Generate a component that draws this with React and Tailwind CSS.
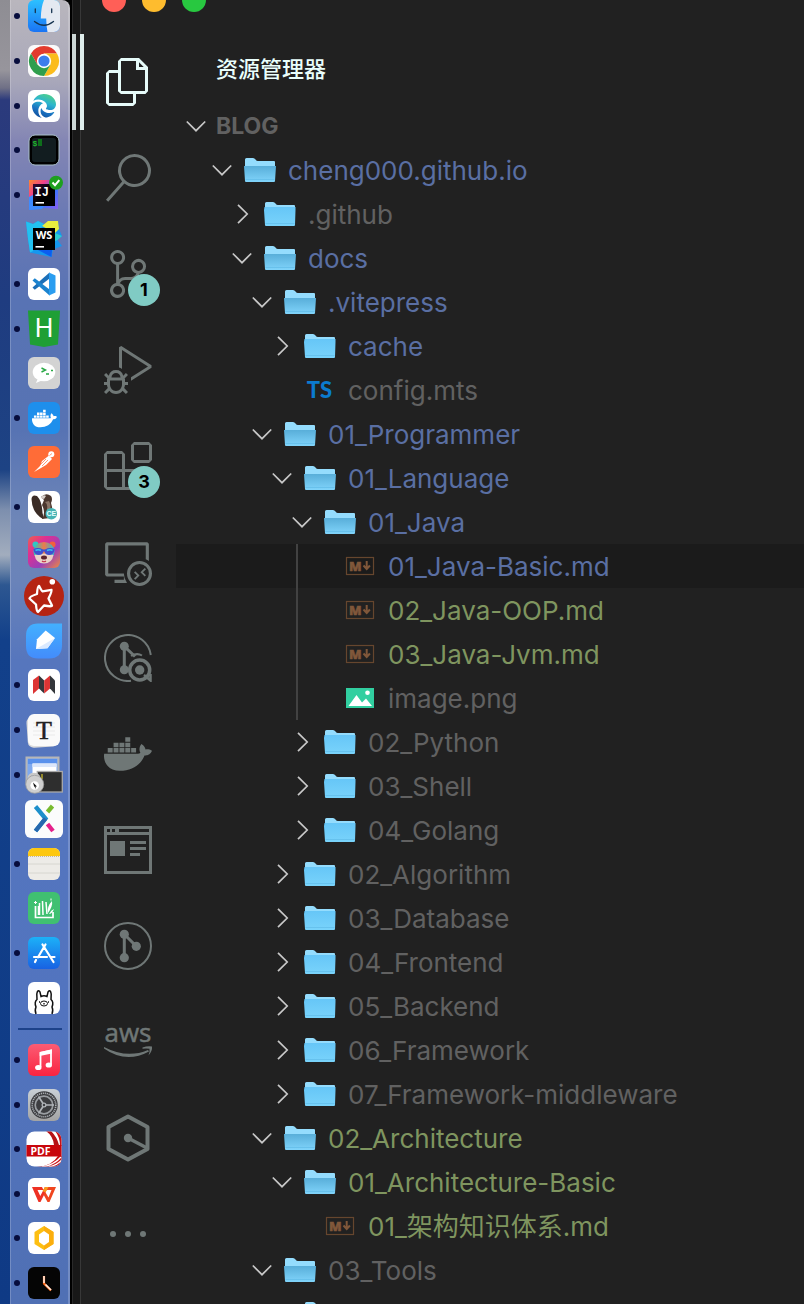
import React from "react";
import { VscFiles, VscSearch, VscSourceControl, VscDebugAlt, VscExtensions, VscRemoteExplorer } from "react-icons/vsc";
import { FaDocker, FaEdge } from "react-icons/fa6";

/* ---------- dock icons: 40x40 canvas, the tile itself is 32x32 ---------- */

const Tile = ({ fill = "#fff" }) => <rect x="4" y="4" width="32" height="32" rx="6" fill={fill} />;

const dockTop = [
  {
    name: "Finder",
    running: true,
    art: (
      <>
        <defs>
          <linearGradient id="finder" x1="0" y1="0" x2="0" y2="1">
            <stop offset="0" stopColor="#2cc0ff" />
            <stop offset="1" stopColor="#1a74f4" />
          </linearGradient>
        </defs>
        <Tile fill="url(#finder)" />
        <path d="M20 4H30a6 6 0 0 1 6 6V30a6 6 0 0 1-6 6H23.500Q22.300 30 22.200 22.500H16.800Q17 11 20 4Z" fill="#e4e9f1" />
        <path d="M11.300 13v3.500M27.700 13v3.500" stroke="#16334f" strokeWidth="1.300" strokeLinecap="round" />
        <path d="M10.500 25.500Q20 33 29.500 25.500" stroke="#16334f" strokeWidth="1.300" fill="none" strokeLinecap="round" />
      </>
    ),
  },
  {
    name: "Chrome",
    running: true,
    art: (
      <>
        <Tile fill="#fafafa" />
        <path d="M20 12.500H33A15 15 0 0 0 7 12.500L13.500 23.750Z" fill="#e33b2e" />
        <path d="M20 12.500H33A15 15 0 0 0 7 12.500L13.500 23.750Z" fill="#fbbc1c" transform="rotate(120 20 20)" />
        <path d="M20 12.500H33A15 15 0 0 0 7 12.500L13.500 23.750Z" fill="#2f9e4c" transform="rotate(240 20 20)" />
        <circle cx="20" cy="20" r="7.200" fill="#fff" />
        <circle cx="20" cy="20" r="5.600" fill="#3b7ded" />
      </>
    ),
  },
  {
    name: "Edge",
    running: true,
    art: (
      <>
        <defs>
          <linearGradient id="edge" x1="0.700" y1="0" x2="0.300" y2="1">
            <stop offset="0" stopColor="#4fd08a" />
            <stop offset="0.350" stopColor="#2cb5cf" />
            <stop offset="0.700" stopColor="#1a72c2" />
            <stop offset="1" stopColor="#124f9c" />
          </linearGradient>
        </defs>
        <Tile />
        <FaEdge x="8" y="8" size={24} fill="url(#edge)" />
      </>
    ),
  },
  {
    name: "iTerm",
    running: true,
    art: (
      <>
        <rect x="5" y="5" width="30" height="30" rx="6" fill="#000" stroke="#a9bfca" strokeWidth="1" />
        <rect x="8" y="8" width="24" height="24" rx="3" fill="#121d20" />
        <text x="8.500" y="15.500" fontSize="8" fontWeight="700" fill="#1fb52c" fontFamily="Liberation Mono, monospace">$</text>
        <rect x="14" y="9" width="4" height="7" fill="#0e6f1b" />
      </>
    ),
  },
  {
    name: "IntelliJ IDEA",
    running: true,
    art: (
      <>
        <defs>
          <linearGradient id="ij" x1="0" y1="0" x2="1" y2="1">
            <stop offset="0" stopColor="#ff8a2a" />
            <stop offset="0.300" stopColor="#f0408c" />
            <stop offset="0.550" stopColor="#2b7bff" />
            <stop offset="1" stopColor="#8b5cf0" />
          </linearGradient>
          <linearGradient id="ijin" x1="0" y1="0" x2="1" y2="1">
            <stop offset="0" stopColor="#3a0a38" />
            <stop offset="0.500" stopColor="#000" />
          </linearGradient>
        </defs>
        <path d="M5 5H34V34L20 33L5 35Z" fill="url(#ij)" />
        <path d="M5 22L9 20V31L20 31L18 34L5 35Z" fill="#3d8bff" />
        <rect x="9" y="9" width="22" height="22" fill="url(#ijin)" />
        <text x="10.500" y="20.500" fontSize="12" fontWeight="700" fill="#fff" fontFamily="Liberation Mono, monospace">IJ</text>
        <rect x="11.500" y="27" width="8.500" height="1.600" fill="#fff" />
        <circle cx="32" cy="7.700" r="7" fill="#1ea01e" />
        <path d="M28.500 7.500L31 10.200L35.300 5.200" stroke="#fff" strokeWidth="2" fill="none" />
      </>
    ),
  },
  {
    name: "WebStorm",
    art: (
      <>
        <path d="M2 2.500L9 5L14 2L20 5L34 2.500L35 10L38 17L33.500 21L38 27L29 30.500L27.500 38L6 33.500L4 20Z" fill="#1597ee" />
        <path d="M2 2.500L9 5L14 2L20 5L15 12L9 32L6 33.500L4 20Z" fill="#22c1f0" />
        <path d="M18 7L24 2H34L35 10L31 14Z" fill="#e9ee3f" />
        <path d="M31 14L38 17L33.500 21L31 22Z" fill="#2ccfd0" />
        <path d="M14 31H28L27.500 38Z" fill="#0b5df0" />
        <rect x="9" y="9" width="22" height="22" fill="#000" />
        <text x="20" y="20" fontSize="11" fontWeight="700" textAnchor="middle" fill="#fff" fontFamily="Open Sans, sans-serif">WS</text>
        <rect x="11.500" y="27" width="8.500" height="1.600" fill="#fff" />
      </>
    ),
  },
  {
    name: "Visual Studio Code",
    running: true,
    art: (
      <>
        <Tile />
        <path d="M25.500 8.500L8.500 23.500L10.800 25.800L25.500 14.500Z" fill="#1b6fb8" />
        <path d="M25.500 31.500L8.500 16.500L10.800 14.300L25.500 25.500Z" fill="#1b83cf" />
        <path d="M25 8.500L31.500 11.500V28.500L25 31.500Z" fill="#2a9df0" />
      </>
    ),
  },
  {
    name: "HBuilderX",
    running: true,
    art: (
      <>
        <path d="M4 1.500H36L34 35.500L20 38L6 35.500Z" fill="#1f9f35" />
        <text x="20" y="28" fontSize="25" fontWeight="400" textAnchor="middle" fill="#fff" fontFamily="Inter, sans-serif">H</text>
      </>
    ),
  },
  {
    name: "WeChat DevTools",
    art: (
      <>
        <Tile fill="#d3d3d3" />
        <ellipse cx="20" cy="19" rx="11.300" ry="9.300" fill="#fff" />
        <path d="M14 25L12 30L19 27Z" fill="#fff" />
        <path d="M17.500 15L21.500 17L17.500 19" stroke="#27a844" strokeWidth="1.400" fill="none" />
        <path d="M22 21h3M27 17.500h2" stroke="#27a844" strokeWidth="1.700" />
      </>
    ),
  },
  {
    name: "Docker",
    running: true,
    art: (
      <>
        <Tile fill="#1e8fec" />
        <FaDocker x="8" y="8" size={25} fill="#fff" />
      </>
    ),
  },
  {
    name: "Postman",
    art: (
      <>
        <Tile fill="#ff6c37" />
        <circle cx="27.300" cy="12.300" r="3" fill="#fff" />
        <path d="M25 13.500L28 17L22 23L17 26L10 30L16 24L18 19Z" fill="#fff" />
        <path d="M18 24L24 18M16 23L22 17M25.500 13.500L28 11.500" stroke="#ff6c37" strokeWidth="0.700" />
      </>
    ),
  },
  {
    name: "DBeaver",
    running: true,
    art: (
      <>
        <Tile />
        <path d="M7.500 12Q8 7 13 9Q18 14 18.500 26Q20 31 19 32Q8 26 7.500 12Z" fill="#3a2b25" />
        <path d="M17 10Q22 5 27 9Q29 12 27 16Q30 25 26 31L18 32Q22 26 18 18L20 13Z" fill="#4b372e" />
        <path d="M16.500 11Q19 7 22 9L20 12Z" fill="#d7cfca" />
        <path d="M21 15Q24 17 23 22L25 27Q28 19 25 14Z" fill="#8a7466" />
        <circle cx="27.300" cy="26.700" r="5.800" fill="#45b3b3" />
        <text x="27.300" y="29.200" fontSize="7" fontWeight="700" textAnchor="middle" fill="#e8ffff" fontFamily="Liberation Sans, sans-serif">CE</text>
      </>
    ),
  },
  {
    name: "Bear player",
    art: (
      <>
        <defs>
          <linearGradient id="bear" x1="0" y1="0" x2="1" y2="1">
            <stop offset="0" stopColor="#f0604a" />
            <stop offset="0.300" stopColor="#e02f92" />
            <stop offset="0.650" stopColor="#9a40b8" />
            <stop offset="1" stopColor="#f08a40" />
          </linearGradient>
          <linearGradient id="bearface" x1="0" y1="0" x2="1" y2="0">
            <stop offset="0" stopColor="#26c8c0" />
            <stop offset="0.500" stopColor="#f07a4a" />
            <stop offset="1" stopColor="#28b8d8" />
          </linearGradient>
        </defs>
        <Tile fill="url(#bear)" />
        <circle cx="11.500" cy="12.500" r="3" fill="#2fc7c4" />
        <circle cx="28.500" cy="12.500" r="3" fill="#f2603c" />
        <ellipse cx="20" cy="19.500" rx="10.500" ry="9.500" fill="url(#bearface)" />
        <path d="M10.500 23Q20 20 29.500 23Q28 31.500 20 31.500Q12 31.500 10.500 23Z" fill="#ead2c8" />
        <path d="M9.500 17Q14 15 19 17.500H21Q26 15 30.500 17Q30 23 25 23Q21.500 23 20.500 19.500H19.500Q18.500 23 15 23Q10 23 9.500 17Z" fill="#3f4fd0" />
        <path d="M11.500 18.500Q14 17 17 18.500M23 18.500Q26 17 28.500 18.500" stroke="#35c3ee" strokeWidth="1.500" fill="none" />
        <ellipse cx="20" cy="25.500" rx="3" ry="2" fill="#5b2430" />
        <path d="M18 29Q20 30.500 22 29" stroke="#c4354a" strokeWidth="1.200" fill="none" />
      </>
    ),
  },
  {
    name: "RedisInsight",
    art: (
      <>
        <circle cx="20" cy="20" r="20" fill="#b52312" />
        <path d="M15 9.800Q17.500 15 18.500 15.300L27.500 13.800Q28.500 14.500 24.500 22.500L28 29.500Q28 31 20 29.500L14 36Q12.500 36 12 28.500L5.500 22.500Q5.500 20.500 13 18Q13.500 10 15 9.800Z" stroke="#fff" strokeWidth="2.300" fill="none" strokeLinejoin="round" />
        <circle cx="28.300" cy="5.700" r="2.800" fill="#fff" />
      </>
    ),
  },
  {
    name: "Pen notes",
    art: (
      <>
        <defs>
          <linearGradient id="pen" x1="0" y1="0" x2="0" y2="1">
            <stop offset="0" stopColor="#43b0ff" />
            <stop offset="1" stopColor="#438cfb" />
          </linearGradient>
        </defs>
        <path d="M14 2.500H38V24Q38 37.500 25 37.500H14Q2 37.500 2 25V15Q2 2.500 14 2.500Z" fill="url(#pen)" />
        <path d="M21.700 9.500L31 17L23.500 27.300L12 28L13 18.300Z" fill="#fff" />
        <path d="M31 17L23.500 27.300L12 28Z" fill="#dbeaff" />
      </>
    ),
  },
  {
    name: "MindMaster",
    running: true,
    art: (
      <>
        <Tile />
        <path d="M9 15L15 10.500V23.500L9 29Z" fill="#dc3434" />
        <path d="M15 10.500L20.200 15.500V28.500L15 23.500Z" fill="#33363b" />
        <path d="M20.200 15.500L26 10.500V23.500L20.200 28.500Z" fill="#dc3434" />
        <path d="M26 10.500L31 15.500V29L26 23.500Z" fill="#33363b" />
      </>
    ),
  },
  {
    name: "Typora",
    running: true,
    art: (
      <>
        <rect x="3" y="6" width="31" height="31" rx="6" fill="#dcdcdc" transform="rotate(-4 20 20)" />
        <Tile fill="#fafafa" />
        <path d="M9 13H31M9 17H31M9 21H31M9 25H31" stroke="#e2e2e2" strokeWidth="0.700" />
        <text x="20" y="28.500" fontSize="26" textAnchor="middle" fill="#222" stroke="#222" strokeWidth="0.500" fontFamily="Liberation Serif, serif">T</text>
      </>
    ),
  },
  {
    name: "Secure shell",
    running: true,
    art: (
      <>
        <rect x="2.500" y="2.500" width="32" height="25" fill="#7fa9ee" stroke="#b6b6b6" strokeWidth="2" />
        <rect x="4" y="4" width="29" height="5" fill="#5a91ec" />
        <rect x="8.500" y="8.500" width="24" height="16" fill="#fff" />
        <rect x="8.500" y="8.500" width="24" height="3.500" fill="#dbe6fa" />
        <rect x="13.300" y="16.500" width="25" height="20.500" fill="#2e2e2e" stroke="#a9a9a9" strokeWidth="1.300" />
        <path d="M18 19v5" stroke="#d6c52a" strokeWidth="1.200" />
        <path d="M5 27V22Q6 19 10 19Q14 19 15 22V27" stroke="#c9c9c9" strokeWidth="2.500" fill="none" />
        <circle cx="10.700" cy="29.300" r="9" fill="#cfcfcf" stroke="#9b9b9b" strokeWidth="0.800" />
        <circle cx="10.700" cy="30.500" r="4.300" fill="#fff" />
        <path d="M9 27.500L13 31.500H11.500L12 34L10 31Z" fill="#111" />
      </>
    ),
  },
  {
    name: "X tool",
    art: (
      <>
        <rect x="1" y="1" width="38" height="38" rx="6" fill="#fbfcfc" />
        <path d="M11.500 7.500L21.500 19.500L11.500 32" stroke="#1c8fcb" strokeWidth="4.300" fill="none" />
        <path d="M21.500 19.500L11.500 32" stroke="#2768ae" strokeWidth="4.300" />
        <path d="M23.500 13L28.500 7" stroke="#78bb2f" strokeWidth="4.300" />
        <path d="M23.500 25L29 32" stroke="#e5218b" strokeWidth="4.300" />
      </>
    ),
  },
  {
    name: "Notes",
    running: true,
    art: (
      <>
        <Tile fill="#edebe7" />
        <path d="M4 12V10a6 6 0 0 1 6-6H30a6 6 0 0 1 6 6V12Z" fill="#fdc70f" />
        <path d="M4 12.500H36" stroke="#b7a987" strokeWidth="0.800" strokeDasharray="1 1" />
        <path d="M4 20H36M4 29H36" stroke="#d2d0cc" strokeWidth="0.800" />
      </>
    ),
  },
  {
    name: "Books",
    art: (
      <>
        <Tile fill="#40c071" />
        <path d="M11.500 18V29.500H29V24" stroke="#fff" strokeWidth="1.700" fill="none" />
        <path d="M15.500 15V27M18.500 13L19 27M22 14L23 26M14.500 18V27" stroke="#fff" strokeWidth="1.500" />
        <path d="M24 25Q23 18 28 13Q29 18 24 25ZM25 26Q27 22 30 21Q28 26 25 26Z" fill="#fff" />
        <path d="M11.500 13v3M10 14.500h3M27 10.500v2" stroke="#fff" strokeWidth="1" />
      </>
    ),
  },
  {
    name: "App Store",
    running: true,
    art: (
      <>
        <defs>
          <linearGradient id="store" x1="0" y1="0" x2="0" y2="1">
            <stop offset="0" stopColor="#1cb1f8" />
            <stop offset="1" stopColor="#1862e3" />
          </linearGradient>
        </defs>
        <Tile fill="url(#store)" />
        <path d="M21.500 11.500L14 24.300M18.500 11.500L29.500 29M10 24H23M27.500 24H30.500M12 27L11 29" stroke="#fff" strokeWidth="2.200" strokeLinecap="round" />
      </>
    ),
  },
  {
    name: "Ollama",
    art: (
      <>
        <Tile />
        <path d="M12 36Q10.500 32 12 29Q10 24 13 21.500L12.800 16Q13.500 11 16 14L17 18.500Q20 17 23 18.500L24 14Q26.500 11 27.200 16L27 21.500Q30 24 28 29Q29.500 32 28 36" stroke="#111" strokeWidth="1.500" fill="none" />
        <ellipse cx="20" cy="25.500" rx="3.500" ry="2.500" stroke="#111" strokeWidth="1" fill="none" />
        <path d="M20 25v1.500M15 24h1M24 24h1" stroke="#111" strokeWidth="1.300" />
      </>
    ),
  },
];

const dockBottom = [
  {
    name: "Music",
    running: true,
    art: (
      <>
        <defs>
          <linearGradient id="music" x1="0" y1="0" x2="0" y2="1">
            <stop offset="0" stopColor="#fb5c74" />
            <stop offset="1" stopColor="#fa2440" />
          </linearGradient>
        </defs>
        <Tile fill="url(#music)" />
        <path d="M16.500 27V13L27 10.500V24.500" stroke="#fff" strokeWidth="1.800" fill="none" />
        <path d="M15.700 12L27.900 9.500V13.500L15.700 16Z" fill="#fff" />
        <ellipse cx="14.300" cy="27.500" rx="3.200" ry="2.600" fill="#fff" />
        <ellipse cx="24.800" cy="25" rx="3.200" ry="2.600" fill="#fff" />
      </>
    ),
  },
  {
    name: "System Settings",
    running: true,
    art: (
      <>
        <defs>
          <linearGradient id="gear" x1="0" y1="0" x2="0" y2="1">
            <stop offset="0" stopColor="#c9d0d6" />
            <stop offset="1" stopColor="#a3a3a3" />
          </linearGradient>
        </defs>
        <Tile fill="url(#gear)" />
        <circle cx="20" cy="20" r="13.700" fill="#3c3d40" />
        <circle cx="20" cy="20" r="11.800" stroke="#a9adb1" strokeWidth="1.600" strokeDasharray="1.200 0.800" fill="none" />
        <circle cx="20" cy="20" r="8.800" stroke="#9a9ea2" strokeWidth="1.700" fill="none" />
        <path d="M20 20H30M20 20L14.500 11.500M20 20L14.500 28.500" stroke="#b0b4b8" strokeWidth="1.700" />
        <circle cx="20" cy="20" r="2.500" fill="#b0b4b8" />
        <circle cx="20" cy="20" r="1.200" fill="#3c3d40" />
      </>
    ),
  },
  {
    name: "PDF",
    running: true,
    art: (
      <>
        <clipPath id="pdfclip">
          <rect x="2.500" y="2.500" width="35" height="35" rx="8" />
        </clipPath>
        <g clipPath="url(#pdfclip)">
          <rect x="2" y="2" width="36" height="36" fill="#fff" />
          <path d="M22 2Q29 7 30 16L35 16Q33 8 27 2Z" fill="#b51216" />
          <path d="M31 2L38 2V17H36Q36 8 31 2Z" fill="#ca1015" />
          <path d="M13 38Q28 37 34 27H38V38Z" fill="#ca1015" />
          <path d="M18 38Q30 36 37 28M25 38Q33 36 38 31" stroke="#fff" strokeWidth="1.300" fill="none" />
          <rect x="2" y="16" width="36" height="11.500" fill="#c8060c" />
        </g>
        <text x="16.500" y="25.500" fontSize="10.500" fontWeight="700" textAnchor="middle" fill="#fff" fontFamily="Open Sans, sans-serif">PDF</text>
      </>
    ),
  },
  {
    name: "WPS Office",
    running: true,
    art: (
      <>
        <Tile />
        <path d="M8 13H18L19.500 16H13.500L16.300 22L21 13H24L16.500 28H14.500Z" fill="#ee3124" />
        <path d="M21 13H32L25.500 28H23.500L19.500 20.500L21 17.500L24.500 23.500L27.500 16H19.500Z" fill="#f0461f" />
        <path d="M18.500 17L21 13H24.500L21.500 18.500Z" fill="#f79b1d" />
      </>
    ),
  },
  {
    name: "Hex tool",
    running: true,
    art: (
      <>
        <Tile />
        <path d="M20 8L29.500 14V26L20 32L10.500 26V14Z" fill="#fdbf12" />
        <path d="M20 8L29.500 14V26L20 32Z" fill="#fbae0d" />
        <path d="M20 13L25 16.500V24L20 27.500L15 24V16.500Z" fill="#fff" />
      </>
    ),
  },
  {
    name: "Clock",
    running: true,
    art: (
      <>
        <Tile fill="#050505" />
        <path d="M20 13V20.500L27 27.500" stroke="#ff6a1a" strokeWidth="2.200" fill="none" />
        <path d="M20 13V20M21.500 21.500L27 27" stroke="#ffe9dc" strokeWidth="1.600" fill="none" />
      </>
    ),
  },
];

function DockItem({ app }) {
  return (
    <li className="flex min-h-0 flex-1 items-center gap-1 pl-[3px]">
      <span className={app.running ? "size-1.5 rounded-full bg-[#070d3d]" : "size-1.5"} />
      <button type="button" aria-label={app.name} className="shrink-0">
        <svg viewBox="0 0 40 40" className="block size-10">{app.art}</svg>
      </button>
    </li>
  );
}

function Dock() {
  return (
    <nav
      aria-label="Dock"
      className="flex w-[60px] shrink-0 flex-col overflow-hidden rounded-tr-lg border-r-2 border-l border-white/20 bg-[linear-gradient(180deg,#b9b6bd_0,#a9a8ba_80px,#8486b4_140px,#6c7ab4_210px,#5873b4_300px,#5773b3_430px,#6e86b8_520px,#6a83b9_580px,#5676bd_660px,#5274bf_1000px,#5070b4_1304px)]"
    >
      <ul className="-mt-1.5 flex h-[1026px] shrink-0 flex-col">
        {dockTop.map((app) => (
          <DockItem key={app.name} app={app} />
        ))}
      </ul>
      <div className="mr-1.5 ml-[7px] mt-2 h-0.5 shrink-0 bg-[#1d428a]" />
      <ul className="mt-2 flex h-[267px] shrink-0 flex-col">
        {dockBottom.map((app) => (
          <DockItem key={app.name} app={app} />
        ))}
      </ul>
    </nav>
  );
}

/* ---------- activity bar ---------- */

const GitSearch = () => (
  <svg viewBox="0 0 48 48" className="size-12" fill="none" stroke="currentColor">
    <path d="M46.800 21A23 23 0 1 0 27 46.800" strokeWidth="2" />
    <circle cx="20.300" cy="12.300" r="4.500" fill="currentColor" stroke="none" />
    <circle cx="20.300" cy="35.700" r="4.500" fill="currentColor" stroke="none" />
    <path d="M20.300 12V36M20.300 12.300L31 22.500" strokeWidth="3" />
    <path d="M27 22Q33 18.500 38 21.500" strokeWidth="2" />
    <circle cx="35.700" cy="36" r="10" strokeWidth="3.500" />
    <circle cx="35.700" cy="36" r="4.700" fill="currentColor" stroke="none" />
    <path d="M40 41L46.500 46.500V40" strokeWidth="2.500" />
  </svg>
);

const BrowserPanel = () => (
  <svg viewBox="0 0 48 48" className="size-12" fill="currentColor">
    <path fillRule="evenodd" d="M0 0H48V48H0ZM3 9V45H45V9ZM3 3V6H6V3ZM8 3V6H11V3ZM15 3V6H45V3Z" />
    <rect x="6" y="15" width="15" height="15" />
    <rect x="26" y="15" width="16" height="3" />
    <rect x="26" y="21" width="16" height="3" />
    <rect x="26" y="27" width="10" height="3" />
  </svg>
);

const GitBranch = () => (
  <svg viewBox="0 0 48 48" className="size-12" fill="currentColor">
    <circle cx="24" cy="24" r="23" fill="none" stroke="currentColor" strokeWidth="2" />
    <circle cx="20.300" cy="12.300" r="4.600" />
    <circle cx="20.300" cy="35.700" r="4.600" />
    <circle cx="32.300" cy="24.300" r="4.600" />
    <path d="M20.300 12V36M20.300 12.300L32.300 24.300" stroke="currentColor" strokeWidth="3" />
  </svg>
);

const Aws = () => (
  <svg viewBox="0 0 48 48" className="size-12 overflow-visible" fill="currentColor">
    <text x="24" y="24" fontSize="26" textAnchor="middle" stroke="currentColor" strokeWidth="0.500" fontFamily="Open Sans, sans-serif">aws</text>
    <path d="M0 29Q23 41 44 32L45 33.500Q22 46 0 30.500Z" />
    <path d="M38.500 29.500Q44 27.500 48 28.500Q48.500 33 44.500 37.500Q46 33 45.500 30.800Q42 30 38.500 30.800Z" />
  </svg>
);

const Hexagon = () => (
  <svg viewBox="0 0 48 48" className="size-12" fill="none" stroke="currentColor" strokeWidth="4" strokeLinejoin="round">
    <path d="M24 2.500L43.500 13V35L24 45.500L4.500 35V13Z" />
    <path d="M24 24L43 34" strokeWidth="3.500" />
    <circle cx="24" cy="24" r="4.200" fill="currentColor" stroke="none" />
  </svg>
);

const More = () => (
  <svg viewBox="0 0 48 48" className="size-12" fill="currentColor">
    <circle cx="9" cy="24" r="3" />
    <circle cx="24" cy="24" r="3" />
    <circle cx="39" cy="24" r="3" />
  </svg>
);

const activities = [
  { name: "资源管理器", icon: <VscFiles className="size-12" />, active: true },
  { name: "搜索", icon: <VscSearch className="size-12" /> },
  { name: "源代码管理", icon: <VscSourceControl className="size-12" />, badge: 1 },
  { name: "运行和调试", icon: <VscDebugAlt className="size-12" /> },
  { name: "扩展", icon: <VscExtensions className="size-12" />, badge: 3 },
  { name: "远程资源管理器", icon: <VscRemoteExplorer className="size-12" /> },
  { name: "GitLens Inspect", icon: <GitSearch /> },
  { name: "Docker", icon: <FaDocker className="size-12" /> },
  { name: "Project Manager", icon: <BrowserPanel /> },
  { name: "GitLens", icon: <GitBranch /> },
  { name: "AWS", icon: <Aws /> },
  { name: "Hexagon", icon: <Hexagon /> },
  { name: "更多", icon: <More /> },
];

function ActivityBar() {
  return (
    <nav aria-label="活动栏" className="flex w-24 shrink-0 flex-col">
      {activities.map((a) => (
        <button
          key={a.name}
          type="button"
          aria-label={a.name}
          className={
            a.active
              ? "flex h-24 shrink-0 items-center border-l-4 border-[#dfeeec] pl-5 text-[#e6fbf9]"
              : "relative flex h-24 shrink-0 items-center pl-6 text-[#6f7776]"
          }
        >
          {a.icon}
          {a.badge && (
            <span className="absolute top-12 left-12 flex size-8 items-center justify-center rounded-full bg-[#80cbc4] font-[Inter,sans-serif] text-lg font-bold text-black">
              {a.badge}
            </span>
          )}
        </button>
      ))}
    </nav>
  );
}

/* ---------- explorer tree ---------- */

const Chevron = ({ open }) => (
  <svg viewBox="0 0 20 20" className="size-5 shrink-0" fill="none" stroke="#c8c8c8" strokeWidth="1.700">
    <path d={open ? "M0.800 5.500L10 14.700L19.200 5.500" : "M6 0.800L15.200 10L6 19.200"} />
  </svg>
);

const Folder = ({ open }) => (
  <svg viewBox="0 0 32 24" className="h-6 w-8 shrink-0">
    <defs>
      <linearGradient id="folderClosed" x1="0" y1="0" x2="0" y2="1">
        <stop offset="0" stopColor="#66c6f7" />
        <stop offset="1" stopColor="#79d3fb" />
      </linearGradient>
      <linearGradient id="folderOpen" x1="0" y1="0" x2="0" y2="1">
        <stop offset="0" stopColor="#58aed9" />
        <stop offset="1" stopColor="#80d4fb" />
      </linearGradient>
    </defs>
    <path d="M1 1.500Q1 0 2.500 0H9Q10.500 0 11.500 1.500Q12.500 3 14 3H30Q31 3 31 4V20H1Z" fill="#94dcfd" />
    {open ? (
      <path d="M0 8H32L31 23Q31 24 30 24H2Q1 24 1 23Z" fill="url(#folderOpen)" />
    ) : (
      <path d="M0.500 5H31.500V8L31 23Q31 24 30 24H2Q1 24 1 23L0 8Z" fill="url(#folderClosed)" />
    )}
    <path d="M1.500 21.500H30.500" stroke="#5db9e6" strokeWidth="0.600" />
  </svg>
);

const TypeScriptIcon = () => (
  <svg viewBox="0 0 32 24" className="h-6 w-8 shrink-0 overflow-visible">
    <text x="15.500" y="20" fontSize="22" fontWeight="900" textAnchor="middle" fill="#0b7bcf" fontFamily="Lato, sans-serif">TS</text>
  </svg>
);

const MarkdownIcon = () => (
  <svg viewBox="0 0 32 24" className="h-6 w-8 shrink-0">
    <rect x="2.500" y="3.500" width="27" height="17" fill="none" stroke="#66462e" strokeWidth="1.200" />
    <text x="5" y="16.500" fontSize="13" fontWeight="800" fill="#80573a" stroke="#80573a" strokeWidth="0.500" fontFamily="Open Sans, sans-serif">M</text>
    <path d="M22.700 7V14M19.500 11.500L22.700 15L25.900 11.500" stroke="#80573a" strokeWidth="2" fill="none" />
  </svg>
);

const ImageIcon = () => (
  <svg viewBox="0 0 32 24" className="h-6 w-8 shrink-0">
    <rect x="2" y="2" width="28" height="20" fill="#31cfa0" />
    <path d="M4.500 20L12.500 9L18 16.500L22 12.500L28 20Z" fill="#fff" />
    <circle cx="23.500" cy="6.700" r="2.300" fill="#fff" />
  </svg>
);

const indent = ["pl-9", "pl-14", "pl-19", "pl-24", "pl-29", "pl-34"];
const tones = { blue: "text-[#5a6fa3]", green: "text-[#7f955f]", gray: "text-[#616161]" };

const rows = [
  { d: 0, n: "cheng000.github.io", k: "open", c: "blue" },
  { d: 1, n: ".github", k: "closed", c: "gray" },
  { d: 1, n: "docs", k: "open", c: "blue" },
  { d: 2, n: ".vitepress", k: "open", c: "blue" },
  { d: 3, n: "cache", k: "closed", c: "blue" },
  { d: 3, n: "config.mts", k: "ts", c: "gray" },
  { d: 2, n: "01_Programmer", k: "open", c: "blue" },
  { d: 3, n: "01_Language", k: "open", c: "blue" },
  { d: 4, n: "01_Java", k: "open", c: "blue" },
  { d: 5, n: "01_Java-Basic.md", k: "md", c: "blue", guide: true, selected: true },
  { d: 5, n: "02_Java-OOP.md", k: "md", c: "green", guide: true },
  { d: 5, n: "03_Java-Jvm.md", k: "md", c: "green", guide: true },
  { d: 5, n: "image.png", k: "img", c: "gray", guide: true },
  { d: 4, n: "02_Python", k: "closed", c: "gray" },
  { d: 4, n: "03_Shell", k: "closed", c: "gray" },
  { d: 4, n: "04_Golang", k: "closed", c: "gray" },
  { d: 3, n: "02_Algorithm", k: "closed", c: "gray" },
  { d: 3, n: "03_Database", k: "closed", c: "gray" },
  { d: 3, n: "04_Frontend", k: "closed", c: "gray" },
  { d: 3, n: "05_Backend", k: "closed", c: "gray" },
  { d: 3, n: "06_Framework", k: "closed", c: "gray" },
  { d: 3, n: "07_Framework-middleware", k: "closed", c: "gray" },
  { d: 2, n: "02_Architecture", k: "open", c: "green" },
  { d: 3, n: "01_Architecture-Basic", k: "open", c: "green" },
  { d: 4, n: "01_架构知识体系.md", k: "md", c: "green" },
  { d: 2, n: "03_Tools", k: "open", c: "gray" },
  { d: 3, n: "", k: "closed", c: "gray" },
];

const fileIcons = { ts: <TypeScriptIcon />, md: <MarkdownIcon />, img: <ImageIcon /> };

function Row({ row }) {
  const folder = row.k === "open" || row.k === "closed";
  return (
    <li className="shrink-0">
      <button
        type="button"
        className={`flex h-11 w-full items-center text-left ${row.guide ? "pl-30" : indent[row.d]} ${row.selected ? "bg-[#1b1b1b]" : ""}`}
      >
        {row.guide && <span className="mr-3.5 h-full w-0.5 shrink-0 bg-[#424242]" />}
        {folder ? <Chevron open={row.k === "open"} /> : <span className="w-5 shrink-0" />}
        <span className="mx-3 flex shrink-0">{folder ? <Folder open={row.k === "open"} /> : fileIcons[row.k]}</span>
        <span className={`truncate pt-0.5 text-[26px] leading-8 ${tones[row.c]}`}>{row.n}</span>
      </button>
    </li>
  );
}

function Explorer() {
  return (
    <section className="flex min-w-0 flex-1 flex-col">
      <h1 className="flex h-[70px] shrink-0 items-center pl-10 text-[22px] leading-8 font-medium text-[#eafffc]">资源管理器</h1>
      <button type="button" className="flex h-11 shrink-0 items-center gap-2.5 pl-2.5 text-[23px] font-bold text-[#616161]">
        <Chevron open />
        BLOG
      </button>
      <ul className="flex flex-col">
        {rows.map((row, i) => (
          <Row key={i} row={row} />
        ))}
      </ul>
    </section>
  );
}

export default function App() {
  return (
    <div className="flex h-screen overflow-hidden bg-black font-[Inter,'Noto_Sans_CJK_SC',sans-serif]">
      <div className="w-2.5 shrink-0 bg-[linear-gradient(180deg,#8e8d93_0,#97959c_70px,#6f7086_88px,#2b3a7c_100px,#1f3c80_300px,#1d4384_470px,#7d8fae_510px,#a2adbe_555px,#2d5791_585px,#12408a_640px,#0f3a85_1304px)]" />
      <Dock />
      <div className="ml-0.5 w-2 shrink-0 border-l border-[#2a2a2a] bg-[#181818] pt-[34px]">
        <div className="-ml-px h-24 w-1 bg-[#ccd7d5]" />
      </div>
      <main className="flex min-w-0 flex-1 flex-col bg-[#212121] shadow-[inset_1px_0_0_#383838]">
        <div className="flex h-[34px] shrink-0 gap-4 pl-[22px]">
          <button type="button" aria-label="关闭" className="-mt-3 size-6 rounded-full bg-[#ff5f57]" />
          <button type="button" aria-label="最小化" className="-mt-3 size-6 rounded-full bg-[#febc2e]" />
          <button type="button" aria-label="缩放" className="-mt-3 size-6 rounded-full bg-[#28c840]" />
        </div>
        <div className="flex min-h-0 flex-1">
          <ActivityBar />
          <Explorer />
        </div>
      </main>
    </div>
  );
}
